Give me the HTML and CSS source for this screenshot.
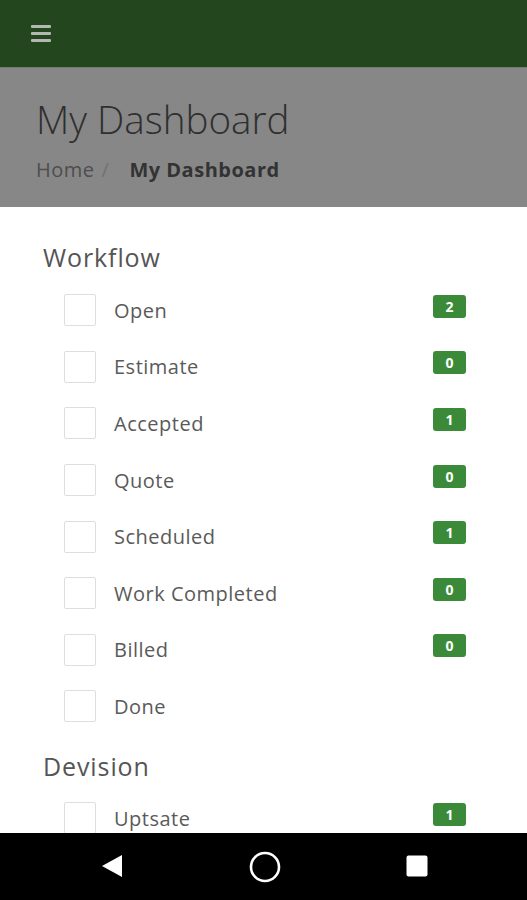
FILE: index.html
```html
<!DOCTYPE html>
<html>
<head>
<meta charset="utf-8">
<link rel="stylesheet" href="styles.css">
</head>
<body>
<div class="screen">
  <header class="topbar">
    <span class="hamburger"><i></i><i></i><i></i></span>
  </header>
  <section class="pagehead">
    <h1 class="title">My Dashboard</h1>
    <div class="crumbs"><span class="crumb">Home</span><span class="sep">/</span><span class="crumb-active">My Dashboard</span></div>
  </section>
  <main class="content">
    <h2 class="group-title">Workflow</h2>
    <ul class="list">
      <li class="row"><span class="check"></span><span class="label">Open</span><span class="badge">2</span></li>
      <li class="row"><span class="check"></span><span class="label">Estimate</span><span class="badge">0</span></li>
      <li class="row"><span class="check"></span><span class="label">Accepted</span><span class="badge">1</span></li>
      <li class="row"><span class="check"></span><span class="label">Quote</span><span class="badge">0</span></li>
      <li class="row"><span class="check"></span><span class="label">Scheduled</span><span class="badge">1</span></li>
      <li class="row"><span class="check"></span><span class="label">Work Completed</span><span class="badge">0</span></li>
      <li class="row"><span class="check"></span><span class="label">Billed</span><span class="badge">0</span></li>
      <li class="row"><span class="check"></span><span class="label">Done</span></li>
    </ul>
    <h2 class="group-title second">Devision</h2>
    <ul class="list">
      <li class="row"><span class="check"></span><span class="label">Uptsate</span><span class="badge">1</span></li>
    </ul>
  </main>
  <nav class="navbar">
    <svg class="nav-icon" width="22" height="24" viewBox="0 0 22 24"><path d="M21 1 L21 23 L1 12 Z" fill="#fff"/></svg>
    <svg class="nav-icon" width="34" height="34" viewBox="0 0 34 34"><circle cx="17" cy="17" r="14" fill="none" stroke="#fff" stroke-width="2.6"/></svg>
    <svg class="nav-icon" width="22" height="22" viewBox="0 0 22 22"><rect x="0.5" y="0.5" width="21" height="21" rx="2" fill="#fff"/></svg>
  </nav>
</div>
</body>
</html>
```

FILE: styles.css
```css
* { box-sizing: border-box; }
html, body { margin: 0; padding: 0; }
body {
  font-family: "Open Sans", "Noto Sans", sans-serif;
  background: #fff;
}
.screen {
  width: 527px;
  height: 900px;
  display: flex;
  flex-direction: column;
  overflow: hidden;
}
.topbar {
  height: 68px;
  flex: none;
  background: #23461f;
  display: flex;
  align-items: center;
  padding-left: 31px;
  border-bottom: 1px solid #6f7f6c;
}
.hamburger {
  display: flex;
  flex-direction: column;
  gap: 4px;
  width: 20px;
}
.hamburger i {
  display: block;
  height: 3px;
  background: #b3b8b2;
  border-radius: 1px;
}
.pagehead {
  height: 139px;
  flex: none;
  background: #878787;
  padding: 25px 0 0 36px;
}
.title {
  margin: 0;
  font-weight: 300;
  font-size: 38.6px;
  line-height: 52px;
  color: #2f2f2f;
}
.crumbs {
  margin-top: 10px;
  font-size: 20px;
  line-height: 30px;
  display: flex;
  letter-spacing: 0.5px;
}
.crumb { color: #4e4e4e; }
.sep { color: #727272; margin: 0 20px 0 7px; }
.crumb-active { color: #333; font-weight: 700; }
.content {
  flex: 1;
  overflow: hidden;
  padding: 30px 61px 0 43px;
}
.group-title {
  margin: 0;
  font-size: 25px;
  line-height: 40px;
  font-weight: 500;
  color: #555;
  letter-spacing: 0.9px;
}
.group-title.second { margin-top: 11px; }
.list {
  list-style: none;
  margin: 5px 0 0 0;
  padding: 0;
}
.second + .list { margin-top: 4px; }
.row {
  height: 56.6px;
  display: flex;
  align-items: center;
  padding-left: 21px;
}
.check {
  width: 32px;
  height: 32px;
  border: 1.5px solid #dedede;
  border-radius: 2px;
  flex: none;
}
.label {
  margin-left: 18px;
  font-size: 20px;
  letter-spacing: 0.5px;
  color: #5a5a5a;
  flex: 1;
}
.badge {
  width: 33px;
  height: 23px;
  background: #3a8a3a;
  border-radius: 3px;
  color: #fff;
  font-weight: 700;
  font-size: 14px;
  display: flex;
  align-items: center;
  justify-content: center;
  margin-top: -8px;
}
.navbar {
  height: 67px;
  flex: none;
  background: #000;
  display: flex;
  align-items: center;
  padding-left: 101px;
}
.nav-icon { display: block; flex: none; }
.nav-icon:nth-child(1) { margin-right: 125px; margin-top: -1px; }
.nav-icon:nth-child(2) { margin-right: 124px; }
.nav-icon:nth-child(3) { margin-top: -1px; }
```
